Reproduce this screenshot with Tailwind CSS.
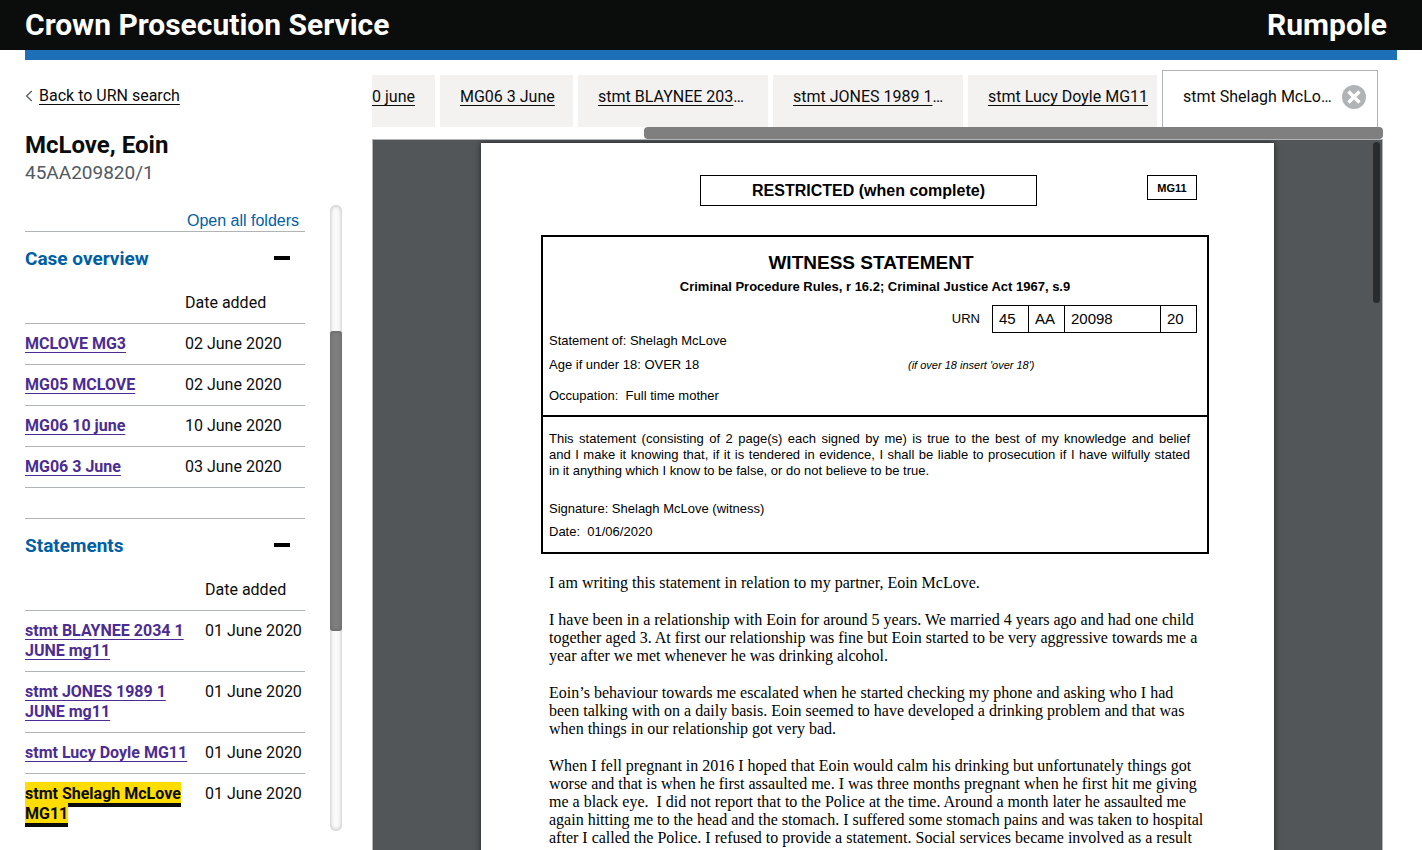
<!DOCTYPE html>
<html lang="en">
<head>
<meta charset="utf-8">
<meta name="viewport" content="width=device-width, initial-scale=1">
<title>Rumpole - Crown Prosecution Service</title>
<script src="https://cdn.jsdelivr.net/npm/@tailwindcss/browser@4"></script>
</head>
<body class="flex h-screen flex-col overflow-hidden bg-white font-['Roboto',sans-serif] text-base text-[#0b0c0c]">

<header class="shrink-0">
  <div class="flex h-[50px] items-center justify-between bg-[#0b0c0c] pr-[35px] pb-[2px] pl-[25px] text-[30px] font-bold text-white">
    <span>Crown Prosecution Service</span>
    <span>Rumpole</span>
  </div>
  <div class="mx-[25px] h-[10px] bg-[#1d70b8]"></div>
</header>

<main class="flex min-h-0 flex-1 pr-[39px] pl-[25px]">

  <aside class="flex w-[317px] shrink-0 flex-col pt-[26px] pb-[19px]">
    <div class="flex h-5 items-center gap-[6px]">
      <svg class="h-3 w-2" viewBox="0 0 8 12" fill="none" stroke="#505a5f" stroke-width="1.2" aria-hidden="true"><path d="M6.8 1 L1.6 6 L6.8 11"/></svg>
      <a href="#" class="underline decoration-1 underline-offset-[3px]">Back to URN search</a>
    </div>
    <h1 class="mt-6 text-2xl leading-[30px] font-bold">McLove, Eoin</h1>
    <p class="text-[19px] leading-[25px] text-[#505a5f]">45AA209820/1</p>

    <div class="mt-5 flex min-h-0 flex-1 justify-between">
      <div class="w-[280px] overflow-hidden">
        <div class="flex h-[26px] items-center justify-end pt-[6px] pr-[6px]">
          <button type="button" class="font-['Liberation_Sans',sans-serif] text-base text-[#005ea5]">Open all folders</button>
        </div>

        <section class="mb-[30px] border-t border-[#b1b4b6]">
          <h2><button type="button" aria-expanded="true" class="flex h-[51px] w-full items-center justify-between pr-[15px] text-[19px] font-bold text-[#005ea5]"><span class="pt-[3px]">Case overview</span><span class="h-1 w-4 bg-black"></span></button></h2>
          <table class="w-full table-fixed text-left leading-5">
            <thead><tr class="border-b border-[#b1b4b6]"><th class="w-[160px] py-[10px]" aria-label="Document"></th><th class="py-[10px] font-normal">Date added</th></tr></thead>
            <tbody>
              <tr class="border-b border-[#b1b4b6]"><td class="py-[10px]"><a href="#" class="font-bold text-[#4c2c92] underline decoration-1 underline-offset-[3px] [text-decoration-skip-ink:none]">MCLOVE MG3</a></td><td>02 June 2020</td></tr>
              <tr class="border-b border-[#b1b4b6]"><td class="py-[10px]"><a href="#" class="font-bold text-[#4c2c92] underline decoration-1 underline-offset-[3px] [text-decoration-skip-ink:none]">MG05 MCLOVE</a></td><td>02 June 2020</td></tr>
              <tr class="border-b border-[#b1b4b6]"><td class="py-[10px]"><a href="#" class="font-bold text-[#4c2c92] underline decoration-1 underline-offset-[3px] [text-decoration-skip-ink:none]">MG06 10 june</a></td><td>10 June 2020</td></tr>
              <tr class="border-b border-[#b1b4b6]"><td class="py-[10px]"><a href="#" class="font-bold text-[#4c2c92] underline decoration-1 underline-offset-[3px] [text-decoration-skip-ink:none]">MG06 3 June</a></td><td>03 June 2020</td></tr>
            </tbody>
          </table>
        </section>

        <section class="border-t border-[#b1b4b6]">
          <h2><button type="button" aria-expanded="true" class="flex h-[51px] w-full items-center justify-between pr-[15px] text-[19px] font-bold text-[#005ea5]"><span class="pt-[3px]">Statements</span><span class="h-1 w-4 bg-black"></span></button></h2>
          <table class="w-full table-fixed text-left leading-5">
            <thead><tr class="border-b border-[#b1b4b6]"><th class="w-[180px] py-[10px]" aria-label="Document"></th><th class="py-[10px] font-normal">Date added</th></tr></thead>
            <tbody class="align-top">
              <tr class="border-b border-[#b1b4b6]"><td class="py-[10px]"><a href="#" class="font-bold whitespace-nowrap text-[#4c2c92] underline decoration-1 underline-offset-[3px] [text-decoration-skip-ink:none]">stmt BLAYNEE 2034 1<br>JUNE mg11</a></td><td class="py-[10px]">01 June 2020</td></tr>
              <tr class="border-b border-[#b1b4b6]"><td class="py-[10px]"><a href="#" class="font-bold whitespace-nowrap text-[#4c2c92] underline decoration-1 underline-offset-[3px] [text-decoration-skip-ink:none]">stmt JONES 1989 1<br>JUNE mg11</a></td><td class="py-[10px]">01 June 2020</td></tr>
              <tr class="border-b border-[#b1b4b6]"><td class="py-[10px]"><a href="#" class="font-bold whitespace-nowrap text-[#4c2c92] underline decoration-1 underline-offset-[3px] [text-decoration-skip-ink:none]">stmt Lucy Doyle MG11</a></td><td class="py-[10px]">01 June 2020</td></tr>
              <tr><td class="py-[10px]"><a href="#" class="bg-[#ffdd00] font-bold whitespace-nowrap shadow-[0_-2px_#ffdd00,0_4px_#0b0c0c]">stmt Shelagh McLove<br>MG11</a></td><td class="py-[10px]">01 June 2020</td></tr>
            </tbody>
          </table>
        </section>
      </div>

      <div class="w-3 rounded-full bg-[#fafafa] pt-[126px] shadow-[inset_0_0_4px_rgba(0,0,0,0.3)]">
        <div class="h-[300px] rounded-[3px] bg-[#7f7f7f] shadow-[inset_0_0_4px_rgba(0,0,0,0.25)]"></div>
      </div>
    </div>
  </aside>

  <div class="ml-[30px] flex min-w-0 flex-1 flex-col pt-[10px]">
    <nav aria-label="Open documents" class="flex h-[57px] shrink-0 items-end justify-end gap-[5px] overflow-hidden pr-[5px] whitespace-nowrap">
      <a href="#" class="h-[52px] shrink-0 bg-[#f3f2f1] px-5 pt-[10px]"><span class="underline decoration-1 underline-offset-[3px] [text-decoration-skip-ink:none]">MG06 10 june</span></a>
      <a href="#" class="h-[52px] w-[133px] shrink-0 bg-[#f3f2f1] px-5 pt-[10px]"><span class="underline decoration-1 underline-offset-[3px] [text-decoration-skip-ink:none]">MG06 3 June</span></a>
      <a href="#" class="h-[52px] w-[190px] shrink-0 bg-[#f3f2f1] px-5 pt-[10px]"><span class="underline decoration-1 underline-offset-[3px] [text-decoration-skip-ink:none]">stmt BLAYNEE 203</span>…</a>
      <a href="#" class="h-[52px] w-[190px] shrink-0 bg-[#f3f2f1] px-5 pt-[10px]"><span class="underline decoration-1 underline-offset-[3px] [text-decoration-skip-ink:none]">stmt JONES 1989 1</span>…</a>
      <a href="#" class="h-[52px] w-[189px] shrink-0 bg-[#f3f2f1] px-5 pt-[10px]"><span class="underline decoration-1 underline-offset-[3px] [text-decoration-skip-ink:none]">stmt Lucy Doyle MG11</span></a>
      <div class="flex h-[57px] w-[216px] shrink-0 justify-between border border-b-0 border-[#b1b4b6] pr-[11px] pl-5">
        <a href="#" aria-current="page" class="pt-[14px]">stmt Shelagh McLo…</a>
        <button type="button" aria-label="Close tab" class="mt-[14px] size-6">
          <svg class="size-6" viewBox="0 0 24 24" aria-hidden="true"><circle cx="12" cy="12" r="12" fill="#b1b4b6"/><path d="M6.5 6.5 L17.5 17.5 M17.5 6.5 L6.5 17.5" stroke="#fff" stroke-width="3.4"/></svg>
        </button>
      </div>
    </nav>
    <div class="flex h-3 shrink-0 justify-end">
      <div class="w-[739px] rounded-[4px] bg-[#7f7f7f]"></div>
    </div>

    <div class="relative min-h-0 flex-1 overflow-hidden border border-b-0 border-[#b1b4b6] bg-[#525659]">
      <div class="absolute top-[2px] right-[2px] h-[161px] w-[7px] rounded-full bg-[#2a2b2d]"></div>

      <article class="mx-auto mt-[3px] w-[793px] bg-white pt-8 pr-[65px] pb-16 pl-[60px] font-['Liberation_Sans',sans-serif] text-[13px] leading-4 text-black shadow-[0_0_6px_rgba(0,0,0,0.6)]">
        <div class="flex items-start pr-3 pl-[159px] font-bold">
          <div class="flex h-[31px] w-[337px] items-center justify-center border border-black text-base">RESTRICTED (when complete)</div>
          <div class="ml-auto flex h-[25px] w-[50px] items-center justify-center border border-black text-[11px]">MG11</div>
        </div>

        <div class="mt-[29px] border-2 border-black">
          <div class="h-[178px] px-[6px] pt-[14px]">
            <h2 class="pr-2 text-center text-[19px] leading-6 font-bold">WITNESS STATEMENT</h2>
            <p class="mt-1 text-center font-bold">Criminal Procedure Rules, r 16.2; Criminal Justice Act 1967, s.9</p>
            <div class="mt-[10px] flex h-7 items-center justify-end gap-3 pr-1">
              <span>URN</span>
              <table class="border-collapse text-[15px] leading-[26px]">
                <tbody><tr>
                  <td class="w-9 border border-black pl-[6px]">45</td>
                  <td class="w-9 border border-black pl-[6px]">AA</td>
                  <td class="w-24 border border-black pl-[6px]">20098</td>
                  <td class="w-9 border border-black pl-[6px]">20</td>
                </tr></tbody>
              </table>
            </div>
            <p>Statement of: Shelagh McLove</p>
            <div class="mt-2 flex"><p class="w-[359px]">Age if under 18: OVER 18</p><p class="text-[11px] italic">(if over 18 insert 'over 18')</p></div>
            <p class="mt-[15px]">Occupation:&nbsp; Full time mother</p>
          </div>
          <div class="h-[137px] border-t-2 border-black px-[6px] pt-[14px]">
            <p class="w-[641px]">
              <span class="block [text-align-last:justify]">This statement (consisting of 2 page(s) each signed by me) is true to the best of my knowledge and belief</span>
              <span class="block [text-align-last:justify]">and I make it knowing that, if it is tendered in evidence, I shall be liable to prosecution if I have wilfully stated</span>
              <span class="block">in it anything which I know to be false, or do not believe to be true.</span>
            </p>
            <p class="mt-[22px]">Signature: Shelagh McLove (witness)</p>
            <p class="mt-[7px]">Date:&nbsp; 01/06/2020</p>
          </div>
        </div>

        <div class="mt-5 flex flex-col gap-[19px] pl-2 font-['Liberation_Serif',serif] text-base leading-[18px] whitespace-nowrap">
          <p>I am writing this statement in relation to my partner, Eoin McLove.</p>
          <p>I have been in a relationship with Eoin for around 5 years. We married 4 years ago and had one child<br>together aged 3. At first our relationship was fine but Eoin started to be very aggressive towards me a<br>year after we met whenever he was drinking alcohol.</p>
          <p>Eoin’s behaviour towards me escalated when he started checking my phone and asking who I had<br>been talking with on a daily basis. Eoin seemed to have developed a drinking problem and that was<br>when things in our relationship got very bad.</p>
          <p>When I fell pregnant in 2016 I hoped that Eoin would calm his drinking but unfortunately things got<br>worse and that is when he first assaulted me. I was three months pregnant when he first hit me giving<br>me a black eye.&nbsp; I did not report that to the Police at the time. Around a month later he assaulted me<br>again hitting me to the head and the stomach. I suffered some stomach pains and was taken to hospital<br>after I called the Police. I refused to provide a statement. Social services became involved as a result</p>
        </div>
      </article>
    </div>
  </div>
</main>
</body>
</html>
